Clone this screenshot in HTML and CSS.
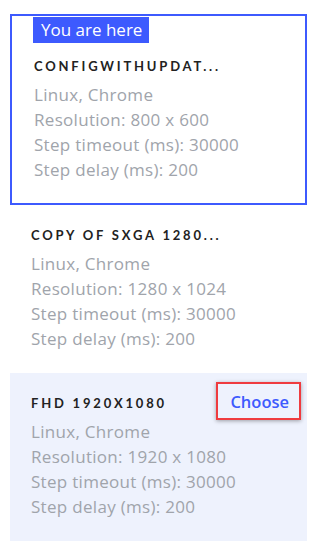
FILE: index.html
```html
<!DOCTYPE html>
<html>
<head>
<meta charset="utf-8">
<link rel="stylesheet" href="styles.css">
</head>
<body>
<div class="list">
  <div class="card current">
    <div class="badge">You are here</div>
    <div class="head"><div class="title">CONFIGWITHUPDAT...</div></div>
    <div class="line">Linux, Chrome</div>
    <div class="line">Resolution: 800 x 600</div>
    <div class="line">Step timeout (ms): 30000</div>
    <div class="line">Step delay (ms): 200</div>
  </div>
  <div class="card">
    <div class="head"><div class="title">COPY OF SXGA 1280...</div></div>
    <div class="line">Linux, Chrome</div>
    <div class="line">Resolution: 1280 x 1024</div>
    <div class="line">Step timeout (ms): 30000</div>
    <div class="line">Step delay (ms): 200</div>
  </div>
  <div class="card hover">
    <div class="head"><div class="title">FHD 1920X1080</div><button class="choose">Choose</button></div>
    <div class="line">Linux, Chrome</div>
    <div class="line">Resolution: 1920 x 1080</div>
    <div class="line">Step timeout (ms): 30000</div>
    <div class="line">Step delay (ms): 200</div>
  </div>
</div>
</body>
</html>
```
FILE: styles.css
```css
html, body { margin: 0; padding: 0; background: #fff; }
body { font-family: "Open Sans", Lato, sans-serif; }
.list { padding: 14px 9px 0 10px; display: flex; flex-direction: column; }
.card { padding: 20px 21px 22px; border: 0 solid transparent; }
.card.current { border: 2px solid #3d5afe; padding: 1px 20px 21px 22px; }
.badge { display: inline-block; background: #3d5afe; color: #fff; font-size: 17px; font-weight: 500; line-height: 26px; height: 26px; padding: 0 7px 0 8px; margin-left: -1px; margin-bottom: 13px; }
.head { display: flex; align-items: center; justify-content: space-between; height: 20px; margin-bottom: 6px; }
.title { font-family: Lato, sans-serif; font-size: 13px; font-weight: 700; letter-spacing: 2.8px; color: #222; line-height: 20px; }
.line { font-size: 17px; letter-spacing: 0.3px; line-height: 25px; color: #a0a4ab; }
.card.hover { background: #eef2fd; }
.choose { font-family: inherit; font-size: 16.5px; font-weight: 600; color: #3d5afe; background: transparent; border: 2px solid #ef3b3f; box-shadow: 0 1px 4px rgba(0,0,0,0.35); padding: 0 10px 0 12px; height: 38px; margin-right: -15px; margin-top: -4px; cursor: pointer; }
```
